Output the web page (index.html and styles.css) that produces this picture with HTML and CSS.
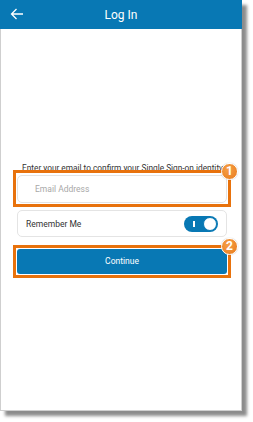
FILE: index.html
```html
<!DOCTYPE html>
<html>
<head>
<meta charset="utf-8">
<link rel="stylesheet" href="styles.css">
</head>
<body>
<div class="screen">
  <header class="topbar">
    <svg class="back" width="14" height="12" viewBox="0 0 14 12"><path d="M13 6H1.5M6.5 1L1.5 6l5 5" fill="none" stroke="#fff" stroke-width="1.3"/></svg>
    <div class="title">Log In</div>
  </header>
  <main class="content">
    <p class="prompt">Enter your email to confirm your Single Sign-on identity:</p>
    <div class="frame frame-input">
      <div class="input">Email Address</div>
      <span class="badge">1</span>
    </div>
    <div class="row">
      <span class="row-label">Remember Me</span>
      <span class="toggle"><span class="tick"></span><span class="knob"></span></span>
    </div>
    <div class="frame frame-button">
      <div class="button">Continue</div>
      <span class="badge">2</span>
    </div>
  </main>
</div>
</body>
</html>
```
FILE: styles.css
```css
html, body { margin: 0; padding: 0; background: #fff; }
body { font-family: Roboto, "Liberation Sans", sans-serif; width: 253px; height: 422px; overflow: hidden; }
.screen {
  width: 240px; height: 409px;
  border: 1px solid #cfcfcf;
  background: #fff;
  box-shadow: 5px 5px 3px rgba(0,0,0,0.45);
}
.topbar {
  height: 29px; margin: -1px -1px 0 -1px;
  background: #0878b4;
  position: relative;
  display: flex; align-items: center; justify-content: center;
}
.back { position: absolute; left: 10px; top: 8px; }
.title { color: #fff; font-size: 12px; padding-top: 1px; }
.content { padding: 134px 10px 0 12px; }
.prompt { margin: 0 0 0 9px; font-size: 8.3px; line-height: 10px; color: #333; white-space: nowrap; }
.frame { position: relative; border: 3px solid #e8720c; }
.frame-input { margin-top: -3px; padding: 2px 1px 1px 1px; }
.input {
  height: 26px; border: 1px solid #e3e3e3; border-radius: 5px;
  font-size: 8.5px; color: #a8a8a8; line-height: 26px; padding-left: 17px;
}
.badge {
  position: absolute; top: -10px; right: -10px;
  width: 15px; height: 15px; border-radius: 50%;
  background: radial-gradient(circle at 40% 35%, #f6a048, #e87a1a);
  border: 1px solid #fff;
  box-shadow: 0 0 1px rgba(0,0,0,0.35);
  color: #fff; font-weight: bold; font-size: 12px; line-height: 15px; text-align: center;
}
.row {
  margin: 3px 4px 0 4px; height: 25px;
  border: 1px solid #e4e4e4; border-radius: 5px;
  display: flex; align-items: center; justify-content: space-between;
  padding: 0 8px 0 8px;
}
.row-label { font-size: 8.5px; color: #333; }
.toggle {
  position: relative; width: 34px; height: 16px; border-radius: 8px;
  background: #0878b4;
}
.tick { position: absolute; left: 9px; top: 5px; width: 1.5px; height: 6px; background: #fff; }
.knob {
  position: absolute; right: 1px; top: 1px; width: 12px; height: 12px;
  border-radius: 50%; background: #fff; border: 1px solid #0878b4;
}
.frame-button { margin-top: 8px; padding: 1px; }
.button {
  height: 25px; background: #0878b4; border-radius: 3px;
  color: #fff; font-size: 8.5px; line-height: 25px; text-align: center;
}
```
